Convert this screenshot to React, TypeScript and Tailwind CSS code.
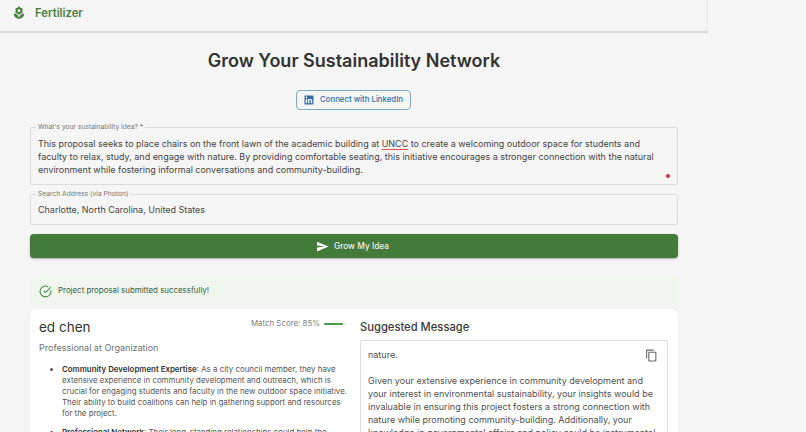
const suggestion = [
  'nature.',
  '',
  'Given your extensive experience in community development and your interest in environmental sustainability, your insights would be invaluable in ensuring this project fosters a strong connection with nature while promoting community-building. Additionally, your knowledge in governmental affairs and policy could be instrumental in navigating any approvals.',
];

export default function App() {
  return (
    <div className="h-screen overflow-hidden bg-[#f5f5f5] font-['Inter',sans-serif] text-[#3c3c3c]">
      <div className="w-[708px]">
        <header className="flex h-[33px] items-center gap-[9px] border-b-2 border-[#d9d9d9] pb-[5px] pl-[12px] [border-right:1px_solid_#e8e8e8]">
          <svg viewBox="0 0 24 24" className="h-[14px] w-[14px] fill-[#4a7f42]">
            <path d="M12 22c4.97 0 9-4.03 9-9-4.97 0-9 4.03-9 9zM5.6 10.25c0 1.38 1.12 2.5 2.5 2.5.53 0 1.01-.16 1.42-.44l-.02.19c0 1.38 1.12 2.5 2.5 2.5s2.5-1.12 2.5-2.5l-.02-.19c.4.28.89.44 1.42.44 1.38 0 2.5-1.12 2.5-2.5 0-1-.59-1.85-1.43-2.25.84-.4 1.43-1.25 1.43-2.25 0-1.38-1.12-2.5-2.5-2.5-.53 0-1.01.16-1.42.44l.02-.19C14.5 2.12 13.38 1 12 1S9.5 2.12 9.5 3.5l.02.19c-.4-.28-.89-.44-1.42-.44-1.38 0-2.5 1.12-2.5 2.5 0 1 .59 1.85 1.43 2.25-.84.4-1.43 1.25-1.43 2.25zM12 5.5c1.38 0 2.5 1.12 2.5 2.5s-1.12 2.5-2.5 2.5S9.5 9.38 9.5 8s1.12-2.5 2.5-2.5zM3 13c0 4.97 4.03 9 9 9 0-4.97-4.03-9-9-9z" />
          </svg>
          <span className="text-[11.3px] font-semibold text-[#4a7f42]">Fertilizer</span>
        </header>

        <main className="px-[30px] pt-[16px]">
          <h1 className="text-center text-[18px] font-semibold leading-[24px] text-[#333333]">
            Grow Your Sustainability Network
          </h1>

          <div className="mt-[17px] flex justify-center">
            <button className="mr-[2px] flex h-[20px] w-[115px] items-center justify-center gap-[5px] rounded-[4px] border border-[#7fa8cf] text-[7.8px] font-medium text-[#2f6da8]">
              <svg viewBox="0 0 24 24" className="h-[12px] w-[12px] fill-[#2f6da8]">
                <path d="M19 3a2 2 0 0 1 2 2v14a2 2 0 0 1-2 2H5a2 2 0 0 1-2-2V5a2 2 0 0 1 2-2h14m-.5 15.5v-5.3a3.26 3.26 0 0 0-3.26-3.26c-.85 0-1.84.52-2.32 1.3v-1.11h-2.79v8.37h2.79v-4.93c0-.77.62-1.4 1.39-1.4a1.4 1.4 0 0 1 1.4 1.4v4.93h2.79M6.88 8.56a1.68 1.68 0 0 0 1.68-1.68c0-.93-.75-1.69-1.68-1.69a1.69 1.69 0 0 0-1.69 1.69c0 .93.76 1.68 1.69 1.68m1.39 9.94v-8.37H5.5v8.37h2.77z" />
              </svg>
              Connect with LinkedIn
            </button>
          </div>

          <fieldset className="mt-[13px] h-[62px] rounded-[2px] border border-[#dcdcdc] px-[7px]">
            <legend className="ml-[-2px] px-[2px] text-[6.7px] leading-[8px] text-[#777777]">What's your sustainability idea? *</legend>
            <div className="relative pt-[6px] text-[8.97px] leading-[13px] text-[#444444]">
              <p>
                This proposal seeks to place chairs on the front lawn of the academic building at{' '}
                <span className="border-b border-[#e0524e]">UNCC</span> to create a welcoming outdoor space for students and faculty to relax, study, and engage with nature. By providing comfortable seating, this initiative encourages a stronger connection with the natural environment while fostering informal conversations and community-building.
              </p>
              <span className="absolute right-[0px] top-[43px] h-[4px] w-[4px] rounded-full bg-[#d32f4f]" />
            </div>
          </fieldset>

          <fieldset className="mt-[5px] h-[35px] rounded-[2px] border border-[#dcdcdc] px-[7px]">
            <legend className="ml-[-2px] px-[2px] text-[6.7px] leading-[8px] text-[#777777]">Search Address (via Photon)</legend>
            <p className="pt-[5px] text-[8.97px] leading-[13px] text-[#444444]">Charlotte, North Carolina, United States</p>
          </fieldset>

          <button className="mt-[9px] flex h-[24px] w-full items-center justify-center gap-[5px] rounded-[4px] bg-[#447a3a] pr-[3px] text-[8.35px] font-medium text-[#f0f0f0] shadow-[0_1px_2px_rgba(0,0,0,0.3)]">
            <svg viewBox="0 0 24 24" className="h-[13px] w-[13px] fill-white">
              <path d="M2.01 21 23 12 2.01 3 2 10l15 2-15 2z" />
            </svg>
            Grow My Idea
          </button>

          <div className="mt-[19px] flex h-[28px] items-center gap-[6px] rounded-[4px] bg-[#eff6ed] pl-[9px] text-[7.9px] text-[#3d5a3b]">
            <svg viewBox="0 0 24 24" className="h-[13px] w-[13px] fill-none stroke-[#4a8a46] stroke-2">
              <path d="M21.8 10A10 10 0 1 1 17 3.3" />
              <path d="m9 11 3 3L22 4" />
            </svg>
            Project proposal submitted successfully!
          </div>

          <section className="mt-[4px] grid h-[200px] grid-cols-[330px_1fr] rounded-[6px] bg-white shadow-[0_0_2px_rgba(0,0,0,0.06)]">
            <div className="pl-[9px] pr-[12px] pt-[9px]">
              <div className="flex items-start justify-between">
                <h2 className="text-[13.5px] leading-[18px] text-[#333333]">ed chen</h2>
                <div className="flex items-center gap-[4px] pr-[2px] text-[7.9px] text-[#808080]">
                  Match Score: 85%
                  <span className="h-[2px] w-[22px] rounded-full bg-[#e2e2e2]">
                    <span className="block h-full w-[85%] rounded-full bg-[#4f9a4a]" />
                  </span>
                </div>
              </div>
              <p className="mt-[5px] text-[9px] leading-[13px] text-[#707070]">Professional at Organization</p>
              <ul className="mt-[10px] list-disc pl-[23px] text-[7.9px] leading-[11px] text-[#555555]">
                <li>
                  <strong className="font-semibold text-[#333333]">Community Development Expertise</strong>: As a city council member, they have extensive experience in community development and outreach, which is crucial for engaging students and faculty in the new outdoor space initiative. Their ability to build coalitions can help in gathering support and resources for the project.
                </li>
                <li className="mt-[8px]">
                  <strong className="font-semibold text-[#333333]">Professional Network</strong>: Their long-standing relationships could help the project reach wider audiences and partners across the city.
                </li>
              </ul>
            </div>

            <div className="pr-[10px] pt-[11px]">
              <h3 className="text-[11.2px] font-medium leading-[14px] text-[#3c3c3c]">Suggested Message</h3>
              <div className="relative mt-[6px] h-[120px] rounded-[2px] border border-[#dddddd] px-[7px] pt-[7px] text-[9px] leading-[13px] text-[#505050]">
                {suggestion.map((line, i) => (
                  <p key={i} className="min-h-[13px]">{line}</p>
                ))}
                <svg viewBox="0 0 24 24" className="absolute right-[9px] top-[8px] h-[13px] w-[13px] fill-[#666666]">
                  <path d="M16 1H4c-1.1 0-2 .9-2 2v14h2V3h12V1zm3 4H8c-1.1 0-2 .9-2 2v14c0 1.1.9 2 2 2h11c1.1 0 2-.9 2-2V7c0-1.1-.9-2-2-2zm0 16H8V7h11v14z" />
                </svg>
              </div>
            </div>
          </section>
        </main>
      </div>
    </div>
  );
}
